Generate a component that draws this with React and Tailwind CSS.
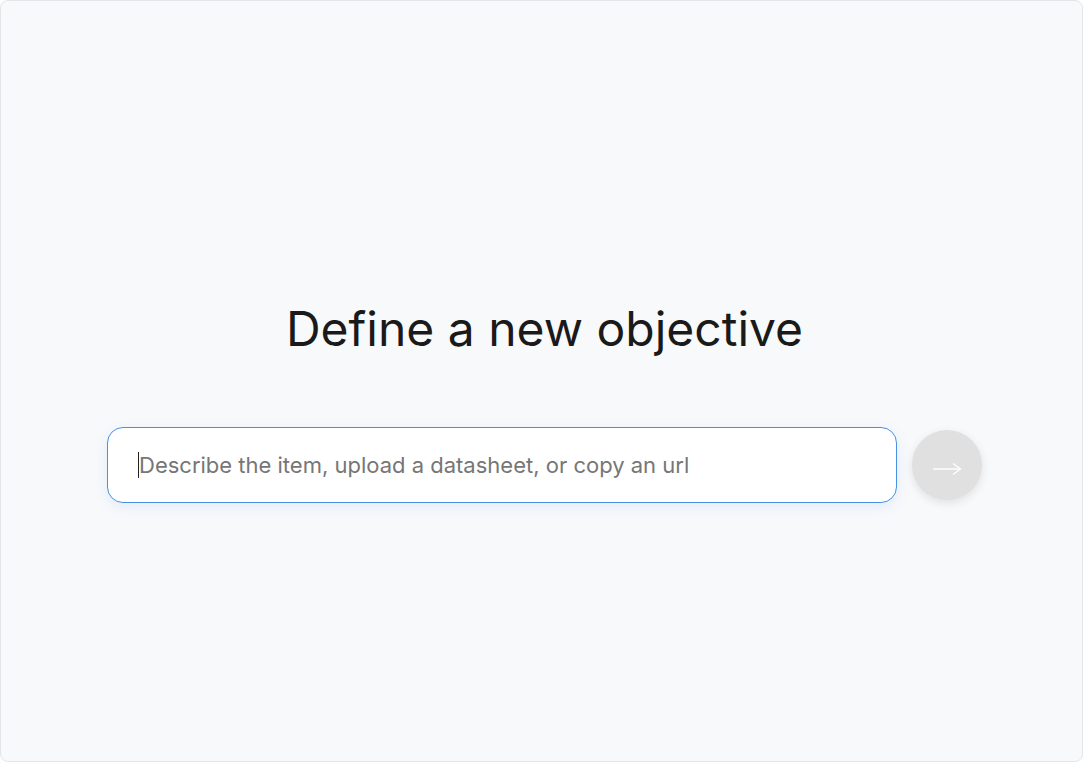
export default function App() {
  return (
    <div className="w-[1083px] h-[762px] bg-white" style={{ fontFamily: "Inter, 'Noto Sans', sans-serif" }}>
      <div className="w-full h-full rounded-lg border border-[#e3e5e8] bg-[#f8f9fb] flex flex-col items-center pt-[299px]">
        <h1 className="text-[48px] leading-[58px] text-[#1a1a1a] font-normal pl-[6px]">Define a new objective</h1>
        <div className="mt-[69px] flex items-center gap-[15px] pl-[6px]">
          <div className="w-[790px] h-[76px] rounded-[16px] border border-[#4a90e2] bg-white shadow-[0_4px_14px_rgba(74,144,226,0.12)] flex items-center pl-[30px]">
            <span className="w-px h-[26px] bg-[#222]"></span>
            <span className="text-[22px] text-[#767676]">Describe the item, upload a datasheet, or copy an url</span>
          </div>
          <div className="w-[70px] h-[70px] rounded-full bg-[#e0e0e0] shadow-[0_3px_10px_rgba(0,0,0,0.10)] flex items-center justify-center pt-[8px]">
            <svg width="30" height="14" viewBox="0 0 30 14" fill="none" stroke="white" strokeWidth="1.4">
              <line x1="1" y1="7" x2="28" y2="7" />
              <path d="M21 1.5 L28.5 7 L21 12.5" strokeLinejoin="miter" />
            </svg>
          </div>
        </div>
      </div>
    </div>
  );
}
